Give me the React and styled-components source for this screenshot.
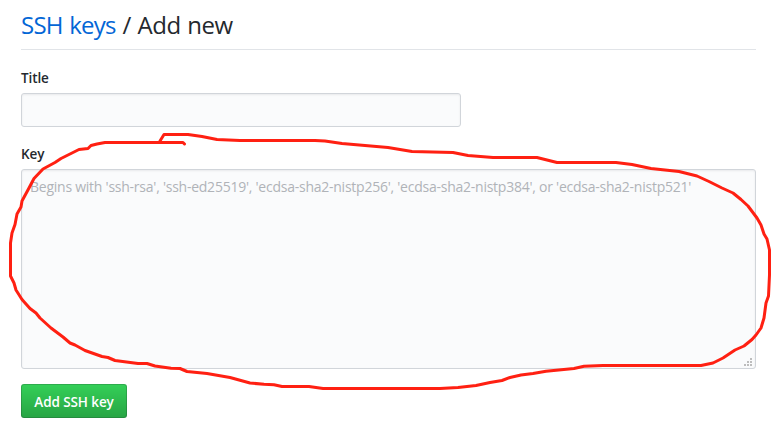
import React from "react";
import styled, { createGlobalStyle } from "styled-components";

const GlobalStyle = createGlobalStyle`
  * { box-sizing: border-box; }
  html, body { margin: 0; background: #fff; overflow: hidden; }
  body { color: #24292e; font-family: "Open Sans", "Noto Sans", sans-serif; font-size: 14px; }
`;

const Page = styled.main`
  position: relative;
  width: 781px;
  height: 425px;
  padding: 0 25px 0 21px;
`;

const Heading = styled.h2`
  height: 50px;
  margin: 0 0 17px;
  padding-top: 8px;
  border-bottom: 1px solid #e1e4e8;
  font-size: 24px;
  font-weight: 400;
  line-height: 33px;
  letter-spacing: -0.5px;
  word-spacing: 1px;
  white-space: nowrap;
`;

const Crumb = styled.a`
  color: #0366d6;
  letter-spacing: -0.75px;
  text-decoration: none;
`;

const Form = styled.form`
  display: flex;
  flex-direction: column;
  align-items: flex-start;
`;

const Label = styled.label`
  height: 20px;
  margin-bottom: 6px;
  font-size: 13.5px;
  font-weight: 600;
  line-height: 22px;
  letter-spacing: -0.1px;
`;

const control = `
  display: block;
  padding: 6px 8px;
  border: 1px solid #d1d5da;
  border-radius: 3px;
  outline: none;
  background: #fafbfc;
  box-shadow: inset 0 1px 2px rgba(27, 31, 35, 0.075);
  color: #24292e;
  font: 400 14px/20px "Open Sans", "Noto Sans", sans-serif;
`;

const TextInput = styled.input`
  ${control}
  width: 440px;
  height: 34px;
  margin-bottom: 16px;
`;

const KeyField = styled.div`
  position: relative;
  width: 100%;
  margin-bottom: 15px;
`;

const KeyArea = styled.textarea`
  ${control}
  width: 100%;
  height: 200px;
  padding-top: 7px;
  resize: none;
  overflow: hidden;
  white-space: nowrap;
  letter-spacing: -0.245px;
  &::placeholder { color: #b0b3b8; opacity: 1; }
`;

const Grip = styled.svg`
  position: absolute;
  right: 4px;
  bottom: 3px;
`;

const SubmitButton = styled.button`
  width: 106px;
  height: 34px;
  padding: 2px 0 0;
  border: 1px solid rgba(27, 31, 35, 0.2);
  border-radius: 3px;
  background: #28a745 linear-gradient(-180deg, #34d058, #28a745 90%) -1px -1px / 110% 110%;
  color: #fff;
  font: 600 13.5px/20px "Open Sans", "Noto Sans", sans-serif;
  letter-spacing: -0.1px;
  white-space: nowrap;
`;

const Annotation = styled.svg`
  position: absolute;
  inset: 0;
  pointer-events: none;
`;

const strokePoints = `184.5,144 183,142.5 105,142.5 97,144 91,145.5 88,148.5 79,149.5 67,155.5 61,158.5 55,162.5
43,169 34,178.5 29,188 22,201 21,207 17,214 15,224.5 12,233 10.5,243 10.5,276 14,283 16,290 22,299.5
30,308.5 36,313 40,318 51,328 63,337 70,343 75,345 85,350.5 102,356.5 108,357.5 115,360.5 138,363.5 147,363.5
155,366 171,368.3 180,368.5 187,371.5 207,373.5 230,377.5 250,383 264,384.3 274,384.8 282,386.5 309,386.5 323,388.5
440,388.5 458,387.5 476,385.5 490,382.5 502,380.5 510,377.5 521,375 533,373.5 546,371.3 574,368.5 584,366.3
603,365.5 701,365.5 713,363 723,358 735,350 744,346 752,339.5 756,335 761,328 764,318 766,303 768.5,296 769.5,275
769.5,250 767,239 764,234 761,225 757,218 748,206 741,199.5 733,193 722,188 709,181.5 697,176 679,171.5
651,168.5 632,164.5 616,162.5 557,162.5 537,157.5 493,157.5 468,155.5 453,152.5 412,151.5 388,147.5 342,143.5
325,141 315,140.5 240,140.5 217,139.5 202,136.5 188,134.5 164,134.5 160,141`;

const gripDots = [[6, 0], [3, 3], [6, 3], [0, 6], [3, 6], [6, 6]];

export default function App() {
  return (
    <>
      <GlobalStyle />
      <Page>
        <Heading><Crumb>SSH keys</Crumb> / Add new</Heading>
        <Form onSubmit={(e) => e.preventDefault()}>
          <Label htmlFor="title">Title</Label>
          <TextInput id="title" />
          <Label htmlFor="key">Key</Label>
          <KeyField>
            <KeyArea
              id="key"
              spellCheck={false}
              placeholder="Begins with 'ssh-rsa', 'ssh-ed25519', 'ecdsa-sha2-nistp256', 'ecdsa-sha2-nistp384', or 'ecdsa-sha2-nistp521'"
            />
            <Grip width="8" height="8" shapeRendering="crispEdges" fill="#bdbdbd">
              {gripDots.map(([x, y]) => <rect key={`${x}-${y}`} x={x} y={y} width="2" height="2" />)}
            </Grip>
          </KeyField>
          <SubmitButton type="submit">Add SSH key</SubmitButton>
        </Form>
        <Annotation width="781" height="425" viewBox="0 0 781 425">
          <polyline points={strokePoints} fill="none" stroke="#ff2012" strokeWidth="3" strokeLinecap="round" strokeLinejoin="round" />
        </Annotation>
      </Page>
    </>
  );
}
